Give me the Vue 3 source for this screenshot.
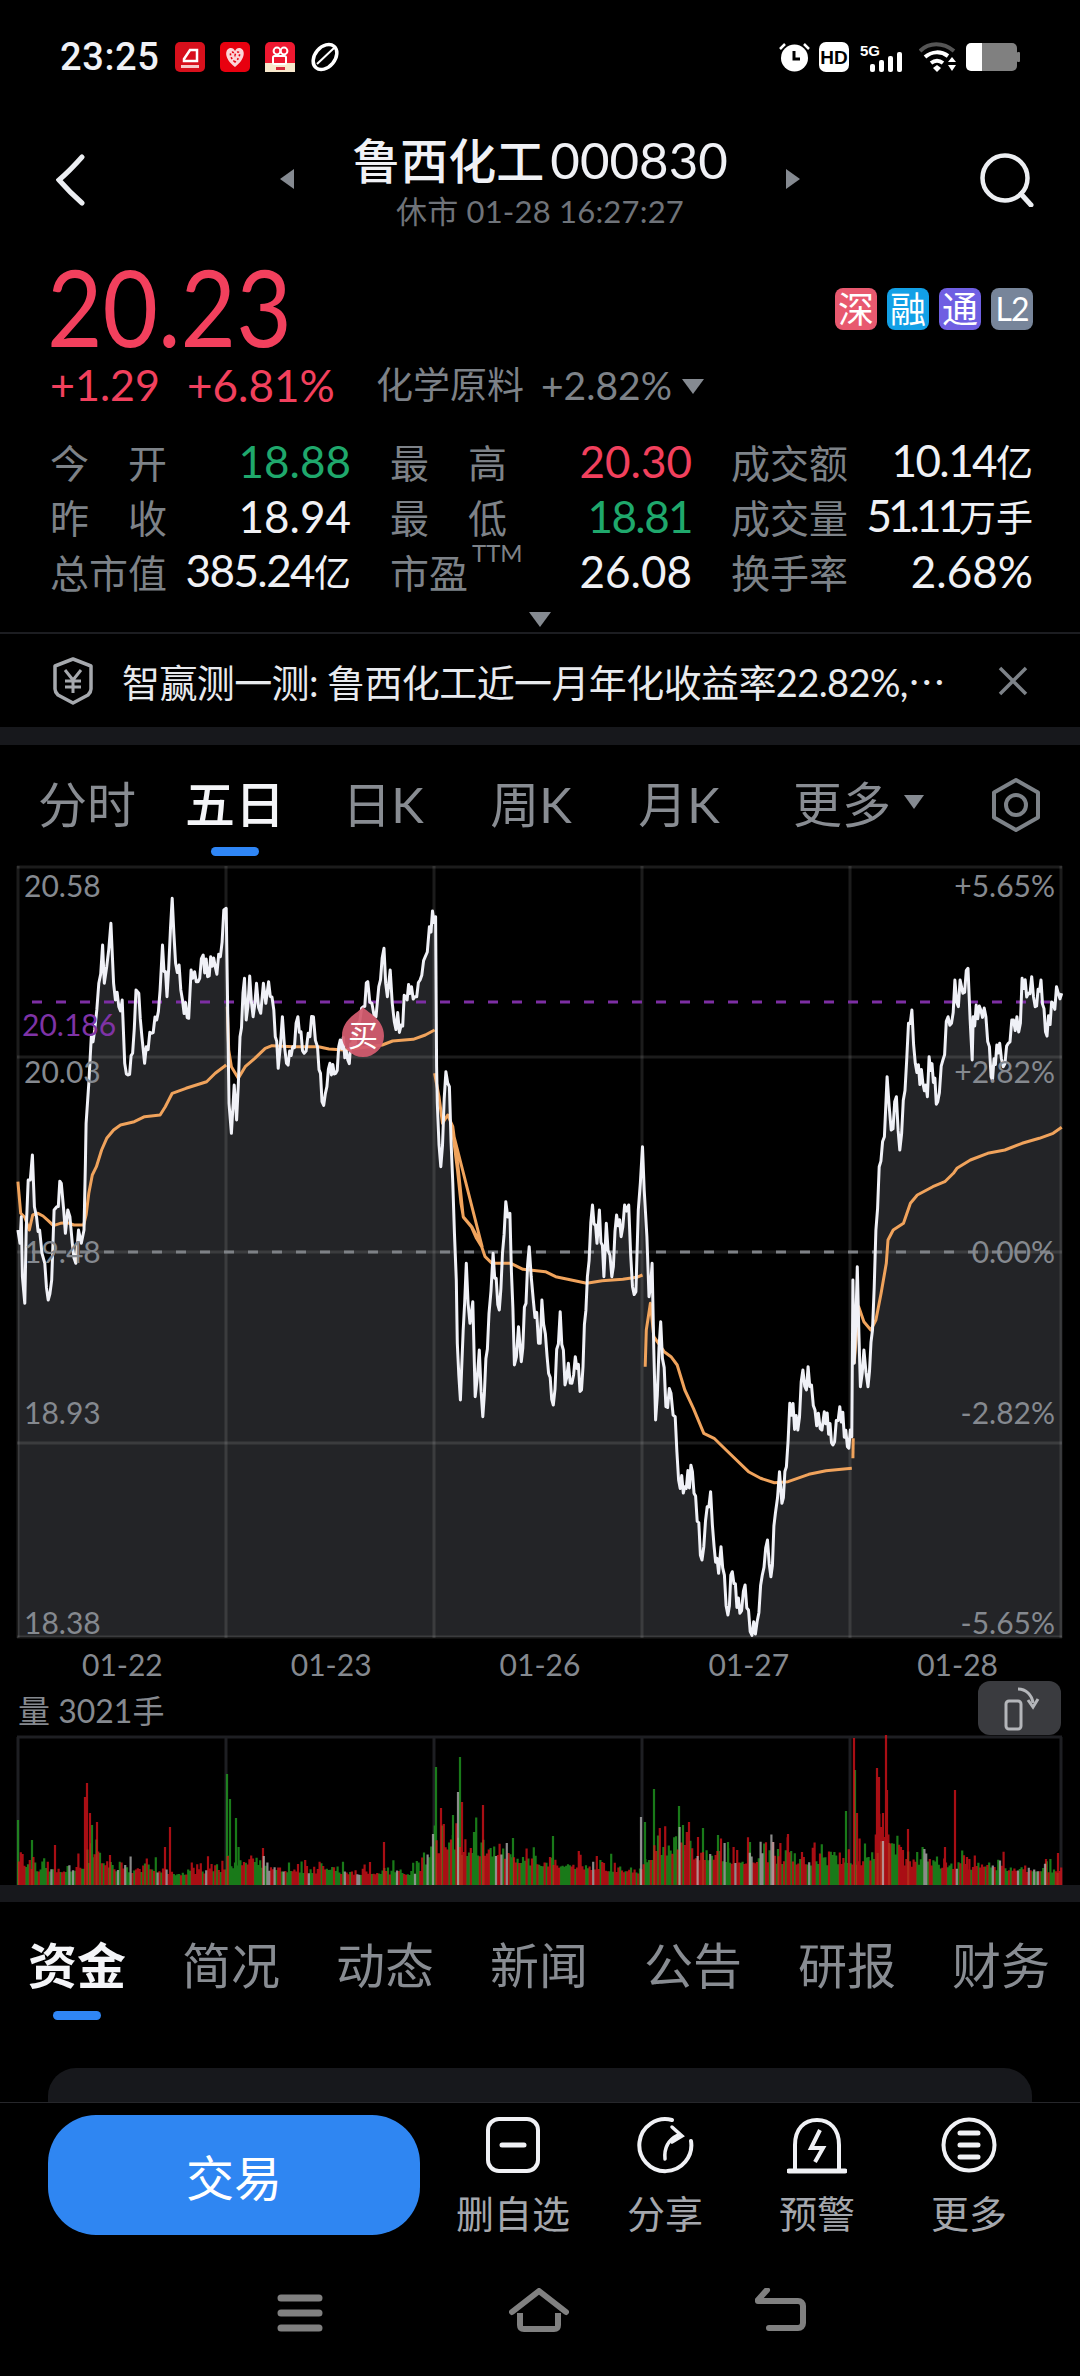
<template>
  <div class="page">
    <div class="status">
      <span class="time">23:25</span>
      <div class="apps">
        <svg width="30" height="30" viewBox="0 0 30 30">
          <rect width="30" height="30" rx="5" fill="#d8101c" />
          <path d="M9 17l6-9h7v11H9z" fill="none" stroke="#fff" stroke-width="2.5" />
          <rect x="6" y="23" width="18" height="3" fill="#f6c8c8" />
        </svg>
        <svg width="30" height="30" viewBox="0 0 30 30">
          <rect width="30" height="30" rx="5" fill="#e8000f" />
          <path d="M15 25C3 16 5 6 11 6c2 0 3 1 4 3 1-2 2-3 4-3 6 0 8 10-4 19z" fill="#fbd5d8" />
          <path d="M15 20C9 15 10 10 12 10s3 3 3 3 1-3 3-3 3 5-3 10z" fill="none" stroke="#e8000f" stroke-width="1.6" stroke-dasharray="2 2" />
        </svg>
        <svg width="30" height="30" viewBox="0 0 30 30">
          <rect width="30" height="30" rx="5" fill="#ef1830" />
          <rect y="21" width="30" height="9" fill="#f8e8cc" />
          <circle cx="12" cy="9" r="3.4" fill="none" stroke="#fff" stroke-width="2" />
          <circle cx="19" cy="9" r="3.4" fill="none" stroke="#fff" stroke-width="2" />
          <rect x="8" y="14" width="13" height="8" rx="1.5" fill="none" stroke="#fff" stroke-width="2" />
          <rect x="11" y="25" width="9" height="3" fill="#d8283a" />
        </svg>
        <svg width="30" height="30" viewBox="0 0 30 30">
          <ellipse cx="15" cy="15" rx="14" ry="10" transform="rotate(-50 15 15)" fill="none" stroke="#fff" stroke-width="3.5" />
          <path d="M7 22L24 6" stroke="#fff" stroke-width="2" />
        </svg>
      </div>
      <div class="sys">
        <svg width="31" height="30" viewBox="0 0 31 30">
          <circle cx="15.5" cy="16" r="13.5" fill="#fff" />
          <path d="M15 9v8h6" fill="none" stroke="#000" stroke-width="3" />
          <path d="M1 7l5-5M30 7l-5-5" stroke="#fff" stroke-width="2.5" />
        </svg>
        <svg width="30" height="30" viewBox="0 0 30 30">
          <rect width="30" height="30" rx="7" fill="#fff" />
          <text x="15" y="22" text-anchor="middle" class="hd">HD</text>
        </svg>
        <svg class="net" width="46" height="30" viewBox="0 0 46 30">
          <text x="0" y="14" class="fiveg">5G</text>
          <rect x="10" y="22" width="5" height="8" rx="2" fill="#fff" />
          <rect x="19" y="18" width="5" height="12" rx="2" fill="#fff" />
          <rect x="28" y="14" width="5" height="16" rx="2" fill="#fff" />
          <rect x="37" y="10" width="5" height="20" rx="2" fill="#fff" />
        </svg>
        <svg width="38" height="30" viewBox="0 0 38 30">
          <path d="M1 9C10 0 24 0 35 9" fill="none" stroke="#555" stroke-width="4" />
          <path d="M6 15c7-6 16-6 23-1" fill="none" stroke="#fff" stroke-width="4" />
          <path d="M12 21c4-3 8-3 12 0" fill="none" stroke="#fff" stroke-width="4" />
          <path d="M14 26l4-3 4 3-4 4z" fill="#fff" />
          <path d="M29 20h8l-4-5zM29 23h8l-4 6z" fill="#fff" />
        </svg>
        <svg width="54" height="30" viewBox="0 0 54 30">
          <path d="M5 1h11v28H5a5 5 0 0 1-5-5V6a5 5 0 0 1 5-5z" fill="#fff" />
          <path d="M16 1h30a5 5 0 0 1 5 5v18a5 5 0 0 1-5 5H16z" fill="#808080" />
          <rect x="51" y="10" width="3" height="10" rx="1" fill="#808080" />
        </svg>
      </div>
    </div>

    <header class="head">
      <div class="head-left">
        <svg width="30" height="52" viewBox="0 0 30 52">
          <path d="M26 3C18 12 10 20 3 26c7 8 15 16 23 23" fill="none" stroke="#eceef2" stroke-width="5" stroke-linecap="round" />
        </svg>
      </div>
      <div class="head-mid">
        <svg class="arrow" width="14" height="20" viewBox="0 0 14 20"><path d="M14 0v20L0 10z" fill="#858a91" /></svg>
        <div class="head-title">
          <div class="title"><span class="title-name">鲁西化工</span> <span class="title-code">000830</span></div>
          <div class="subtitle">休市 01-28 16:27:27</div>
        </div>
        <svg class="arrow" width="14" height="20" viewBox="0 0 14 20"><path d="M0 0v20l14-10z" fill="#858a91" /></svg>
      </div>
      <div class="head-right">
        <svg width="54" height="54" viewBox="0 0 54 54">
          <circle cx="25" cy="25" r="22.5" fill="none" stroke="#eceef2" stroke-width="4.5" />
          <path d="M41 41l10 11" stroke="#eceef2" stroke-width="5" stroke-linecap="round" />
        </svg>
      </div>
    </header>

    <div class="quote-top">
      <div class="price">20.23</div>
      <div class="badges">
        <span class="badge b-red">深</span>
        <span class="badge b-blue">融</span>
        <span class="badge b-purple">通</span>
        <span class="badge b-gray">L2</span>
      </div>
    </div>

    <div class="change">
      <span class="up chg1">+1.29</span>
      <span class="up chg2">+6.81%</span>
      <span class="sector">化学原料</span>
      <span class="sector sector-pct">+2.82%</span>
      <span class="tri"></span>
    </div>

    <div class="stats">
      <div v-for="s in stats" :key="s.label" class="stat">
        <span class="stat-label" :class="{ spread: s.spread }">
          <template v-if="s.spread"><i>{{ s.label[0] }}</i><i>{{ s.label[1] }}</i></template>
          <template v-else>{{ s.label }}<sup v-if="s.sup">{{ s.sup }}</sup></template>
        </span>
        <span class="stat-value" :class="[s.tone, s.fit]">{{ s.value }}<small v-if="s.unit">{{ s.unit }}</small></span>
      </div>
    </div>
    <div class="expand"><span class="tri tri-big"></span></div>
    <div class="line"></div>

    <div class="notice">
      <svg width="42" height="48" viewBox="0 0 42 48">
        <path d="M21 2l18 7v23c0 3-1 4-3 6l-15 8-15-8c-2-2-3-3-3-6V9z" fill="none" stroke="#a6a9ae" stroke-width="3.5" stroke-linejoin="round" />
        <path d="M13 13l8 10 8-10M21 23v13M13 24h16M13 30h16" fill="none" stroke="#a6a9ae" stroke-width="3" />
      </svg>
      <span class="notice-text">智赢测一测: 鲁西化工近一月年化收益率22.82%,⋯</span>
      <svg width="30" height="30" viewBox="0 0 30 30">
        <path d="M2 2l26 26M28 2L2 28" stroke="#7d8288" stroke-width="3.5" />
      </svg>
    </div>
    <div class="band"></div>

    <div class="periods">
      <div v-for="p in periods" :key="p" class="period" :class="{ active: p === '五日' }">
        <span>{{ p }}</span>
        <i v-if="p === '五日'" class="dash"></i>
      </div>
      <div class="period period-more"><span>更多</span><b class="tri tri-more"></b></div>
      <svg class="gear" width="54" height="56" viewBox="0 0 54 56">
        <path d="M27 3l22 12.5v25L27 53 5 40.5v-25z" fill="none" stroke="#7d8288" stroke-width="4" stroke-linejoin="round" />
        <circle cx="27" cy="28" r="10" fill="none" stroke="#7d8288" stroke-width="4" />
      </svg>
    </div>

    <svg class="chart" width="1080" height="782" viewBox="0 860 1080 782">
      <path :d="areaPath" fill="#232427" />
      <g stroke="rgba(255,255,255,.11)" stroke-width="3">
        <path v-for="x in gridX" :key="x" :d="`M${x} 866V1638`" />
        <path v-for="y in gridY" :key="y" :d="`M17 ${y}H1062`" />
      </g>
      <path d="M32 1002H1062" stroke="#7d2ea3" stroke-width="3" stroke-dasharray="10 14" />
      <path d="M32 1252H1062" stroke="#7e8186" stroke-width="3" stroke-dasharray="10 14" />
      <path v-for="(d, i) in avgPaths" :key="i" :d="d" fill="none" stroke="#f0a35c" stroke-width="3" stroke-linejoin="round" />
      <path :d="linePath" fill="none" stroke="#f0f1f7" stroke-width="3" stroke-linejoin="round" />
      <text v-for="a in axisLeft" :key="a.t" x="24" :y="a.y" class="axis">{{ a.t }}</text>
      <text v-for="a in axisRight" :key="a.t" x="1055" :y="a.y" text-anchor="end" class="axis">{{ a.t }}</text>
      <text x="22" y="1036" class="axis axis-purple">20.186</text>
      <path d="M363 1007c5 6 21 12 21 29a21 21 0 0 1-42 0c0-17 16-23 21-29z" fill="#d25b6e" fill-opacity=".94" />
      <text x="363" y="1046" text-anchor="middle" class="buy">买</text>
    </svg>

    <div class="dates">
      <span v-for="d in dates" :key="d">{{ d }}</span>
    </div>

    <div class="vol-label">
      <span>量 3021手</span>
      <button class="rotate">
        <svg width="44" height="48" viewBox="0 0 44 48">
          <rect x="8" y="17" width="15" height="28" rx="3" fill="none" stroke="#b4b6ba" stroke-width="3" />
          <path d="M20 5c8 0 14 6 15 14" fill="none" stroke="#b4b6ba" stroke-width="3" />
          <path d="M30 16l5 7 5-8" fill="none" stroke="#b4b6ba" stroke-width="3" />
        </svg>
      </button>
    </div>

    <svg class="volume" width="1080" height="150" viewBox="0 1735 1080 150">
      <g stroke="#1e1f23" stroke-width="3">
        <path d="M17 1737H1062" />
        <path v-for="x in gridX" :key="x" :d="`M${x} 1737V1885`" />
      </g>
      <g stroke-width="2.2" stroke-opacity=".75" fill="none">
        <path :d="bars.g" stroke="#22a322" />
        <path :d="bars.r" stroke="#e2131b" />
        <path :d="bars.w" stroke="#b8b8b8" />
      </g>
    </svg>
    <div class="band band-2"></div>

    <div class="sections">
      <div v-for="s in sections" :key="s" class="section" :class="{ active: s === '资金' }">
        <span>{{ s }}</span>
        <i v-if="s === '资金'" class="dash"></i>
      </div>
    </div>
    <div class="card"></div>
    <div class="line line-thin"></div>

    <div class="actions">
      <button class="trade">交易</button>
      <div class="action">
        <svg width="60" height="60" viewBox="0 0 60 60">
          <rect x="5" y="4" width="50" height="52" rx="11" fill="none" stroke="#f0f1f5" stroke-width="4" />
          <path d="M19 30h22" stroke="#f0f1f5" stroke-width="5" stroke-linecap="round" />
        </svg>
        <span>删自选</span>
      </div>
      <div class="action">
        <svg width="60" height="60" viewBox="0 0 60 60">
          <path d="M37 5A26 26 0 1 0 56 26" fill="none" stroke="#f0f1f5" stroke-width="4" stroke-linecap="round" />
          <path d="M30 44c-1-10 3-19 13-24" fill="none" stroke="#f0f1f5" stroke-width="3.5" stroke-linecap="round" />
          <path d="M37 12l10 9-10 6" fill="none" stroke="#f0f1f5" stroke-width="3.5" stroke-linecap="round" />
        </svg>
        <span>分享</span>
      </div>
      <div class="action">
        <svg width="60" height="60" viewBox="0 0 60 60">
          <path d="M8 54V30C8 14 17 5 30 5s22 9 22 25v24" fill="none" stroke="#f0f1f5" stroke-width="4" />
          <path d="M2 56h56" stroke="#f0f1f5" stroke-width="5" stroke-linecap="round" />
          <path d="M33 15l-9 18h12l-8 14" fill="none" stroke="#f0f1f5" stroke-width="4" />
        </svg>
        <span>预警</span>
      </div>
      <div class="action">
        <svg width="60" height="60" viewBox="0 0 60 60">
          <circle cx="30" cy="30" r="25.5" fill="none" stroke="#f0f1f5" stroke-width="4" />
          <path d="M21 18h18M21 30h18M21 42h18" stroke="#f0f1f5" stroke-width="5" stroke-linecap="round" />
        </svg>
        <span>更多</span>
      </div>
    </div>

    <nav class="nav">
      <svg class="nav-menu" width="46" height="38" viewBox="0 0 46 38">
        <path d="M4 4h38M4 19h38M4 34h38" stroke="#808080" stroke-width="7" stroke-linecap="round" />
      </svg>
      <svg width="60" height="44" viewBox="0 0 60 44">
        <path d="M3 24L30 3l27 21" fill="none" stroke="#808080" stroke-width="6" stroke-linecap="round" stroke-linejoin="round" />
        <path d="M11 25v12c0 3 1 4 4 4h30c3 0 4-1 4-4V25" fill="none" stroke="#808080" stroke-width="6" />
      </svg>
      <svg width="52" height="44" viewBox="0 0 52 44">
        <path d="M3 13h40c3 0 5 2 5 5v17c0 3-2 5-5 5H14" fill="none" stroke="#808080" stroke-width="6" stroke-linecap="round" />
        <path d="M12 2L3 12" stroke="#808080" stroke-width="6" stroke-linecap="round" />
      </svg>
    </nav>
  </div>
</template>

<script setup>
const stats = [
  { label: "今开", spread: true, value: "18.88", tone: "down" },
  { label: "最高", spread: true, value: "20.30", tone: "up" },
  { label: "成交额", value: "10.14", unit: "亿", fit: "tight" },
  { label: "昨收", spread: true, value: "18.94" },
  { label: "最低", spread: true, value: "18.81", tone: "down", fit: "tight" },
  { label: "成交量", value: "51.11", unit: "万手", fit: "tighter" },
  { label: "总市值", value: "385.24", unit: "亿", fit: "tight" },
  { label: "市盈", sup: "TTM", value: "26.08" },
  { label: "换手率", value: "2.68%" },
];

const periods = ["分时", "五日", "日K", "周K", "月K"];
const sections = ["资金", "简况", "动态", "新闻", "公告", "研报", "财务"];
const dates = ["01-22", "01-23", "01-26", "01-27", "01-28"];

const gridX = [18, 226, 434, 642, 850, 1061];
const gridY = [867, 1057, 1252, 1443, 1637];

const axisLeft = [
  { t: "20.58", y: 897 },
  { t: "20.03", y: 1083 },
  { t: "19.48", y: 1263 },
  { t: "18.93", y: 1424 },
  { t: "18.38", y: 1634 },
];
const axisRight = [
  { t: "+5.65%", y: 897 },
  { t: "+2.82%", y: 1083 },
  { t: "0.00%", y: 1263 },
  { t: "-2.82%", y: 1424 },
  { t: "-5.65%", y: 1634 },
];

let seed = 83021;
const rnd = () => {
  seed = (seed * 16807) % 2147483647;
  return seed / 2147483647;
};

// traced chart points, each run in its own offset and scale
const run = (ox, oy, raw) => {
  const out = [];
  for (let i = 0; i < raw.length; i += 2) {
    out.push([ox + raw[i] / 2.904, oy + raw[i + 1] / 3]);
  }
  return out;
};

const traced = [
  ...run(0, 1130, [52, 300, 58, 340, 62, 260, 65, 440, 72, 520, 76, 300, 82, 150, 88, 150, 94, 75, 100, 230, 106, 260, 115, 300, 122, 370, 130, 400, 140, 510, 150, 450, 157, 240, 165, 230, 178, 160, 185, 240, 190, 310, 197, 240, 203, 260, 210, 340, 220, 400, 228, 300, 236, 340, 244, 300, 248, 100]),
  ...run(0, 850, [250, 820, 258, 700, 265, 560, 275, 540, 287, 400, 298, 285, 303, 400, 310, 350, 322, 220, 330, 400, 345, 470, 355, 450, 362, 640, 372, 675, 385, 610, 395, 420, 403, 430, 412, 560, 420, 640, 425, 590, 440, 550, 455, 510, 465, 420, 472, 285, 485, 440, 500, 145, 510, 340, 520, 345, 530, 450, 548, 505, 555, 360, 565, 365, 575, 395, 590, 315, 603, 380, 612, 320, 625, 350, 640, 320, 650, 180, 657, 175, 660, 400, 665, 760, 672, 850, 680, 705, 687, 810, 697, 560, 710, 385, 715, 510, 725, 378, 735, 500, 745, 400, 757, 490, 765, 400, 772, 460, 780, 395, 795, 480, 808, 655, 820, 500, 832, 640, 850, 590, 865, 500, 883, 610, 895, 550, 910, 500, 922, 590, 935, 755, 945, 730, 958, 640, 975, 670, 988, 570, 1010, 630, 1040, 520, 1055, 470, 1068, 395, 1080, 460, 1092, 500, 1100, 410, 1115, 295, 1125, 440, 1133, 360, 1145, 515, 1165, 525, 1178, 440, 1195, 410, 1205, 440, 1220, 390, 1235, 320, 1247, 230, 1265, 200, 1268, 650, 1270, 760, 1280, 950, 1295, 665, 1305, 710, 1315, 1000]),
  ...run(0, 1130, [1325, 450, 1328, 640, 1337, 810, 1345, 600, 1354, 400, 1365, 580, 1373, 515, 1380, 800, 1392, 660, 1402, 860, 1420, 550, 1432, 370, 1450, 540]),
  ...run(430, 1130, [220, 215, 232, 250, 245, 705, 257, 590, 265, 695, 288, 350, 300, 510, 320, 640, 325, 510, 340, 680, 358, 825, 378, 545, 392, 765, 402, 700, 412, 760, 422, 680, 440, 780, 457, 440, 472, 225, 485, 340, 492, 240, 505, 440, 512, 280, 528, 440, 542, 255, 555, 320, 565, 225, 577, 225, 588, 470, 598, 485, 605, 240, 617, 50, 622, 180, 630, 320, 636, 500, 645, 400, 655, 870, 670, 575, 685, 830, 700, 790, 712, 860, 722, 1050, 740, 1070, 762, 1025, 790, 1290, 805, 1130, 815, 1085, 825, 1250, 838, 1330, 845, 1250, 865, 1455, 878, 1325, 900, 1450, 915, 1365, 930, 1505, 950, 1475, 965, 1335, 980, 1230, 990, 1340, 1003, 1150, 1015, 1025, 1022, 1120, 1035, 1010, 1045, 820, 1068, 900, 1083, 720, 1093, 780, 1098, 710, 1118, 840, 1138, 900, 1145, 845, 1170, 945, 1190, 830, 1212, 950, 1225, 920, 1228, 450, 1232, 700, 1241, 410, 1250, 770, 1260, 660, 1272, 770, 1285, 600, 1295, 300]),
  ...run(540, 850, [985, 950, 1000, 860, 1008, 680, 1020, 840, 1035, 740, 1045, 900, 1065, 630, 1070, 520, 1080, 480, 1090, 640, 1112, 700, 1125, 740, 1130, 620, 1155, 755, 1170, 630, 1185, 500, 1195, 520, 1205, 390, 1215, 470, 1220, 390, 1228, 430, 1243, 355, 1255, 630, 1258, 500, 1280, 480, 1295, 500, 1310, 680, 1335, 580, 1345, 650, 1360, 580, 1375, 510, 1395, 520, 1400, 385, 1418, 430, 1428, 380, 1438, 470, 1455, 390, 1468, 545, 1490, 460, 1505, 430, 1515, 430]),
];

// the real line ticks every minute, so add small wiggles between the traced points
const line = [];
traced.forEach((p, i) => {
  const next = traced[i + 1];
  line.push(p);
  if (!next || next[0] - p[0] < 2.4) return;
  const n = Math.floor((next[0] - p[0]) / 1.4);
  for (let k = 1; k < n; k++) {
    const t = k / n;
    const wiggle = (k % 2 ? 1 : -1) * (3 + rnd() * 8);
    line.push([p[0] + (next[0] - p[0]) * t, p[1] + (next[1] - p[1]) * t + wiggle]);
  }
});

const toPath = (pts) =>
  pts.map((p, i) => `${i ? "L" : "M"}${p[0].toFixed(1)} ${p[1].toFixed(1)}`).join("");

const linePath = toPath(line);
const areaPath = `${linePath}L1062 1637L18 1637Z`;

const avgPaths = [
  [
    ...run(0, 1130, [52, 155, 60, 250, 72, 262, 85, 300, 95, 255, 110, 250, 125, 258, 140, 272, 155, 287, 175, 280, 195, 278, 215, 285, 243, 285, 250, 255, 258, 190, 268, 135, 280, 110, 295, 60, 310, 25, 330, 0]),
    ...run(0, 850, [350, 825, 390, 815, 420, 800, 465, 795, 480, 770, 500, 730, 540, 715, 600, 695, 625, 670, 657, 645]),
  ],
  run(0, 850, [660, 470, 664, 600, 672, 650, 692, 685, 712, 650, 740, 625, 770, 595, 790, 587, 850, 590, 925, 590, 955, 597, 1000, 600, 1110, 585, 1140, 573, 1200, 568, 1235, 555, 1262, 540]),
  [
    ...run(0, 850, [1262, 670, 1275, 740, 1285, 820, 1300, 795, 1315, 830, 1330, 950, 1345, 1100, 1370, 1130, 1400, 1190]),
    ...run(430, 1130, [65, 0, 80, 120, 90, 220, 97, 262, 120, 290, 135, 325, 150, 350, 160, 380, 180, 400, 235, 400, 270, 418, 335, 425, 365, 440, 400, 448, 455, 460, 500, 452, 560, 448, 600, 442, 617, 435]),
  ],
  run(430, 1130, [625, 710, 628, 600, 640, 520, 650, 620, 680, 665, 700, 680, 718, 705, 740, 780, 765, 835, 795, 910, 825, 925, 860, 960, 925, 1025, 960, 1045, 1000, 1058, 1040, 1055, 1100, 1033, 1150, 1022, 1225, 1015]),
  run(430, 1130, [1228, 985, 1229, 925]),
  [
    ...run(430, 1130, [1232, 700, 1245, 530, 1260, 575, 1280, 600, 1295, 570, 1310, 490, 1325, 400, 1330, 330, 1345, 300, 1375, 280, 1395, 220, 1415, 195, 1460, 170, 1495, 155, 1520, 130, 1530, 115]),
    ...run(540, 850, [1250, 930, 1300, 910, 1350, 900, 1400, 880, 1450, 865, 1490, 850, 1515, 832]),
  ],
].map(toPath);

// volume bars: the tall ones are fixed, the rest are seeded so the picture stays stable
const spikes = [
  [18, 65, "g"], [32, 45, "g"], [55, 40, "r"], [85, 88, "r"], [87, 102, "r"], [90, 72, "r"], [92, 60, "g"], [97, 63, "r"], [110, 30, "r"],
  [165, 38, "r"], [170, 58, "r"], [227, 111, "g"], [230, 86, "g"], [236, 67, "g"], [263, 37, "r"], [384, 43, "r"],
  [436, 118, "g"], [441, 77, "r"], [453, 70, "g"], [458, 93, "w"], [460, 128, "g"], [462, 83, "r"], [474, 53, "g"], [483, 80, "r"], [513, 47, "g"],
  [553, 49, "g"], [641, 68, "w"], [645, 63, "g"], [654, 96, "g"], [679, 79, "g"], [683, 60, "g"], [689, 63, "r"], [698, 48, "r"], [703, 57, "g"],
  [718, 50, "g"], [728, 43, "g"], [750, 43, "g"], [773, 43, "r"], [778, 36, "g"], [788, 51, "r"], [846, 74, "g"], [854, 147, "r"], [855, 115, "g"],
  [857, 72, "r"], [877, 117, "r"], [879, 108, "r"], [881, 58, "r"], [882, 58, "r"], [883, 72, "r"], [886, 150, "r"], [887, 95, "r"], [889, 42, "g"],
  [903, 35, "r"], [908, 56, "r"], [945, 38, "r"], [955, 95, "r"], [967, 28, "r"], [1046, 26, "r"], [1058, 32, "r"],
];
const envelope = [
  [18, 48], [40, 26], [80, 30], [95, 50], [120, 26], [160, 26], [180, 20], [226, 30], [245, 46], [270, 30], [340, 22], [420, 22],
  [440, 70], [500, 58], [530, 42], [640, 25], [660, 66], [720, 48], [840, 42], [870, 40], [885, 100], [900, 42], [960, 34], [1062, 26],
];
const envAt = (x) => {
  for (let i = 1; i < envelope.length; i++) {
    const [x0, e0] = envelope[i - 1];
    const [x1, e1] = envelope[i];
    if (x <= x1) return e0 + ((e1 - e0) * (x - x0)) / (x1 - x0);
  }
  return 20;
};
const bars = { g: "", r: "", w: "" };
for (let x = 19; x < 1062; x += 1.8) {
  const a = rnd();
  const pick = a < 0.46 ? "g" : a < 0.9 ? "r" : "w";
  const h = envAt(x) * (0.45 + 0.75 * rnd() * rnd());
  bars[pick] += `M${x.toFixed(1)} 1885v${(-h).toFixed(1)}`;
}
spikes.forEach(([x, h, c]) => {
  bars[c] += `M${x} 1885v${-h}`;
});
</script>

<style>
html,
body {
  margin: 0;
  background: #000;
}
</style>

<style scoped>
.page {
  width: 1080px;
  height: 2376px;
  overflow: hidden;
  background: #000;
  color: #f0f1f5;
  font-family: Lato, "Noto Sans CJK SC", sans-serif;
  display: flex;
  flex-direction: column;
}

.page svg {
  display: block;
  flex: none;
}

.status {
  height: 110px;
  flex: none;
  padding: 3px 60px 0;
  box-sizing: border-box;
  display: flex;
  align-items: center;
}

.time {
  font-family: Roboto, sans-serif;
  font-weight: 500;
  font-size: 38px;
  letter-spacing: 0.6px;
  width: 115px;
}

.apps {
  display: flex;
  gap: 15px;
}

.sys {
  margin-left: auto;
  display: flex;
  align-items: center;
  gap: 9px;
}

.sys .net {
  margin: 0 4px 0 2px;
}

.hd {
  font-family: "Liberation Sans", sans-serif;
  font-weight: 700;
  font-size: 19px;
  fill: #000;
}

.fiveg {
  font-family: "Liberation Sans", sans-serif;
  font-weight: 700;
  font-size: 15px;
  fill: #fff;
}

.head {
  height: 130px;
  flex: none;
  padding-top: 10px;
  box-sizing: border-box;
  display: grid;
  grid-template-columns: 1fr auto 1fr;
  align-items: center;
}

.head-left {
  padding-left: 56px;
}

.head-right {
  justify-self: end;
  padding-right: 46px;
}

.head-mid {
  display: flex;
  align-items: center;
  gap: 58px;
}

.arrow {
  margin-top: -2px;
}

.head-title {
  text-align: center;
}

.title {
  height: 62px;
  line-height: 62px;
  white-space: nowrap;
}

.title-name {
  font-size: 48px;
  font-weight: 500;
}

.title-code {
  font-size: 51px;
  margin-left: 2px;
}

.subtitle {
  font-size: 31px;
  line-height: 40px;
  letter-spacing: 0.2px;
  color: #6f7379;
}

.quote-top {
  height: 120px;
  flex: none;
  padding: 0 47px;
  display: flex;
  justify-content: space-between;
}

.price {
  font-size: 106px;
  line-height: 106px;
  margin-top: 13px;
  height: 106px;
  color: #f2405d;
  transform: scaleX(0.903);
  transform-origin: left center;
}

.badges {
  display: flex;
  gap: 10px;
  padding-top: 48px;
}

.badge {
  width: 42px;
  height: 42px;
  border-radius: 8px;
  font-size: 36px;
  line-height: 42px;
  text-align: center;
  color: #fff;
}

.b-red {
  background: #e8596f;
}

.b-blue {
  background: #12a0e6;
}

.b-purple {
  background: #6f5fe2;
}

.b-gray {
  background: #77859a;
  font-size: 32px;
  letter-spacing: -1px;
}

.change {
  height: 50px;
  flex: none;
  padding-left: 50px;
  display: flex;
  align-items: center;
  font-size: 43px;
  line-height: 50px;
}

.up {
  color: #f2405d;
}

.down {
  color: #1fa86c;
}

.chg1 {
  width: 137px;
}

.chg2 {
  width: 189px;
  font-size: 44px;
}

.sector {
  color: #7d8288;
  font-size: 37px;
}

.sector-pct {
  margin-left: 17px;
  font-size: 39px;
}

.tri {
  display: block;
  width: 0;
  height: 0;
  border-left: 11px solid transparent;
  border-right: 11px solid transparent;
  border-top: 15px solid #858a91;
  margin-left: 10px;
  margin-top: 3px;
}

.stats {
  flex: none;
  margin-top: 23px;
  padding-left: 50px;
  display: grid;
  grid-template-columns: 301px 302px 302px;
  column-gap: 39px;
  grid-auto-rows: 55px;
}

.stat {
  display: flex;
  justify-content: space-between;
  align-items: center;
  white-space: nowrap;
}

.stat-label {
  font-size: 39px;
  color: #7d8288;
  width: 117px;
  position: relative;
}

.stat-label.spread {
  display: flex;
  justify-content: space-between;
}

.stat-label i {
  font-style: normal;
}

.stat-label sup {
  font-size: 24px;
  line-height: 0;
  position: absolute;
  left: 82px;
  top: 10px;
  vertical-align: baseline;
}

.stat-value {
  font-size: 44px;
}

.stat-value.tight {
  letter-spacing: -1.6px;
}

.stat-value.tighter {
  letter-spacing: -4px;
}

.stat-value small {
  font-size: 37px;
  letter-spacing: 0;
}

.expand {
  height: 34px;
  flex: none;
  display: flex;
  justify-content: center;
  align-items: center;
}

.tri-big {
  margin: 8px 0 0;
}

.line {
  height: 2px;
  flex: none;
  background: #1c1d21;
}

.line-thin {
  height: 1px;
  background: #26272b;
}

.notice {
  height: 93px;
  flex: none;
  padding: 0 52px;
  box-sizing: border-box;
  display: flex;
  align-items: center;
}

.notice-text {
  font-size: 38px;
  letter-spacing: -0.6px;
  white-space: nowrap;
  margin-left: 28px;
  width: 878px;
  color: #e8eaee;
}

.band {
  height: 18px;
  flex: none;
  background: #17181c;
}

.band-2 {
  height: 17px;
}

.periods {
  height: 115px;
  flex: none;
  padding: 30px 0 0 13px;
  box-sizing: border-box;
  display: flex;
  align-items: flex-start;
  position: relative;
}

.period {
  width: 148px;
  display: flex;
  flex-direction: column;
  align-items: center;
  font-size: 49px;
  line-height: 58px;
  color: #888c92;
}

.period.active {
  color: #f4f5f8;
  font-weight: 500;
  font-size: 50px;
}

.dash {
  display: block;
  width: 48px;
  height: 9px;
  margin-top: 14px;
  border-radius: 5px;
  background: #2f86f6;
}

.period-more {
  width: auto;
  flex-direction: row;
  align-items: flex-start;
  margin-left: 40px;
}

.tri-more {
  border-left-width: 10px;
  border-right-width: 10px;
  border-top-width: 14px;
  margin: 20px 0 0 13px;
}

.gear {
  margin: 2px 0 0 65px;
}

.chart {
  flex: none;
}

.axis {
  font-family: Lato, sans-serif;
  font-size: 30px;
  fill: #85898f;
}

.axis-purple {
  fill: #7f33a6;
}

.buy {
  font-family: "Noto Sans CJK SC", sans-serif;
  font-size: 30px;
  fill: #fff;
}

.dates {
  height: 43px;
  flex: none;
  padding: 0 18px;
  display: grid;
  grid-template-columns: repeat(5, 1fr);
  text-align: center;
  font-size: 30px;
  line-height: 44px;
  color: #85898f;
}

.vol-label {
  height: 50px;
  flex: none;
  padding-left: 18px;
  box-sizing: border-box;
  position: relative;
  font-size: 32px;
  line-height: 52px;
  color: #85898f;
}

.rotate {
  position: absolute;
  right: 19px;
  top: -4px;
  width: 83px;
  height: 54px;
  padding: 0;
  border: 0;
  border-radius: 12px;
  background: #3a3b3f;
  display: flex;
  justify-content: center;
  align-items: center;
}

.volume {
  flex: none;
}

.sections {
  height: 166px;
  flex: none;
  padding-top: 33px;
  box-sizing: border-box;
  display: grid;
  grid-template-columns: repeat(7, 154px);
  align-items: start;
}

.section {
  display: flex;
  flex-direction: column;
  align-items: center;
  font-size: 49px;
  line-height: 60px;
  color: #888c92;
}

.section .dash {
  margin-top: 16px;
}

.section.active {
  color: #f4f5f8;
  font-weight: 700;
}

.card {
  height: 34px;
  flex: none;
  margin: 0 48px;
  border-radius: 28px 28px 0 0;
  background: #17181c;
}

.actions {
  height: 157px;
  flex: none;
  padding: 12px 0 0 48px;
  box-sizing: border-box;
  display: flex;
  align-items: flex-start;
}

.trade {
  width: 372px;
  height: 120px;
  margin-right: 17px;
  padding: 0;
  border: 0;
  border-radius: 48px;
  background: #2f86f2;
  color: #fff;
  font-family: inherit;
  font-size: 48px;
}

.action {
  width: 152px;
  display: flex;
  flex-direction: column;
  align-items: center;
  font-size: 38px;
  line-height: 48px;
  color: #a4a7ad;
}

.action span {
  margin-top: 14px;
}

.nav {
  flex: 1;
  padding: 28px 0 0 4px;
  display: flex;
  align-items: flex-start;
  justify-content: center;
  gap: 186px;
}

.nav-menu {
  margin-top: 6px;
}
</style>
